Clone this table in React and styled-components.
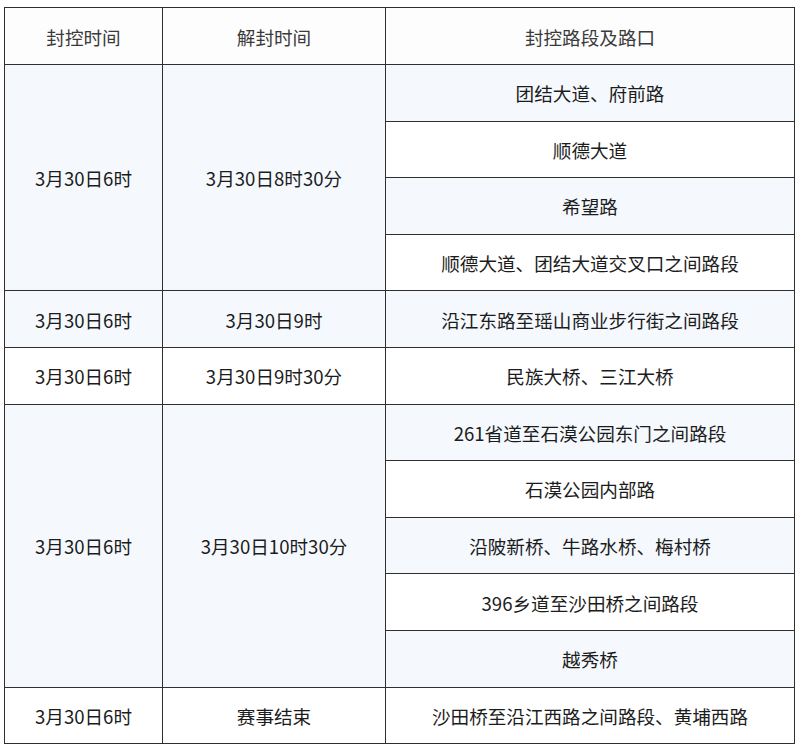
import styled, { createGlobalStyle } from "styled-components";

const GlobalStyle = createGlobalStyle`
  body {
    margin: 0;
    background: #ffffff;
    font-family: "Noto Sans CJK SC", "Noto Sans", sans-serif;
  }
`;

const closures = [
  {
    start: "3月30日6时",
    end: "3月30日8时30分",
    roads: ["团结大道、府前路", "顺德大道", "希望路", "顺德大道、团结大道交叉口之间路段"],
  },
  { start: "3月30日6时", end: "3月30日9时", roads: ["沿江东路至瑶山商业步行街之间路段"] },
  { start: "3月30日6时", end: "3月30日9时30分", roads: ["民族大桥、三江大桥"] },
  {
    start: "3月30日6时",
    end: "3月30日10时30分",
    roads: [
      "261省道至石漠公园东门之间路段",
      "石漠公园内部路",
      "沿陂新桥、牛路水桥、梅村桥",
      "396乡道至沙田桥之间路段",
      "越秀桥",
    ],
  },
  { start: "3月30日6时", end: "赛事结束", roads: ["沙田桥至沿江西路之间路段、黄埔西路"] },
];

const Table = styled.table`
  margin: 7px 0 0 4px;
  width: 791px;
  border-collapse: collapse;
  table-layout: fixed;
  border: 1px solid #2f2f2f;
`;

const Row = styled.tr`
  height: 56.6px;
  background: ${(p) => (p.$tinted ? "#f5f9fe" : "#ffffff")};
`;

const HeadRow = styled.tr`
  height: 57px;
  background: #fdfdfd;
`;

const Th = styled.th`
  border: 1px solid #2f2f2f;
  font-weight: normal;
  font-size: 18.6px;
  color: #3a3a3a;
  text-align: center;
  padding: 0;
`;

const Td = styled.td`
  border: 1px solid #2f2f2f;
  font-size: 18.6px;
  color: #1c1c1c;
  text-align: center;
  vertical-align: middle;
  padding: 0;
`;

export default function App() {
  let rowIndex = 0;
  const rows = [];
  closures.forEach((item, gi) => {
    item.roads.forEach((road, ri) => {
      const tinted = rowIndex % 2 === 0;
      rows.push(
        <Row key={`${gi}-${ri}`} $tinted={tinted}>
          {ri === 0 && <Td rowSpan={item.roads.length}>{item.start}</Td>}
          {ri === 0 && <Td rowSpan={item.roads.length}>{item.end}</Td>}
          <Td>{road}</Td>
        </Row>
      );
      rowIndex++;
    });
  });

  return (
    <>
      <GlobalStyle />
      <Table>
        <colgroup>
          <col style={{ width: "158px" }} />
          <col style={{ width: "223px" }} />
          <col />
        </colgroup>
        <thead>
          <HeadRow>
            <Th>封控时间</Th>
            <Th>解封时间</Th>
            <Th>封控路段及路口</Th>
          </HeadRow>
        </thead>
        <tbody>{rows}</tbody>
      </Table>
    </>
  );
}
